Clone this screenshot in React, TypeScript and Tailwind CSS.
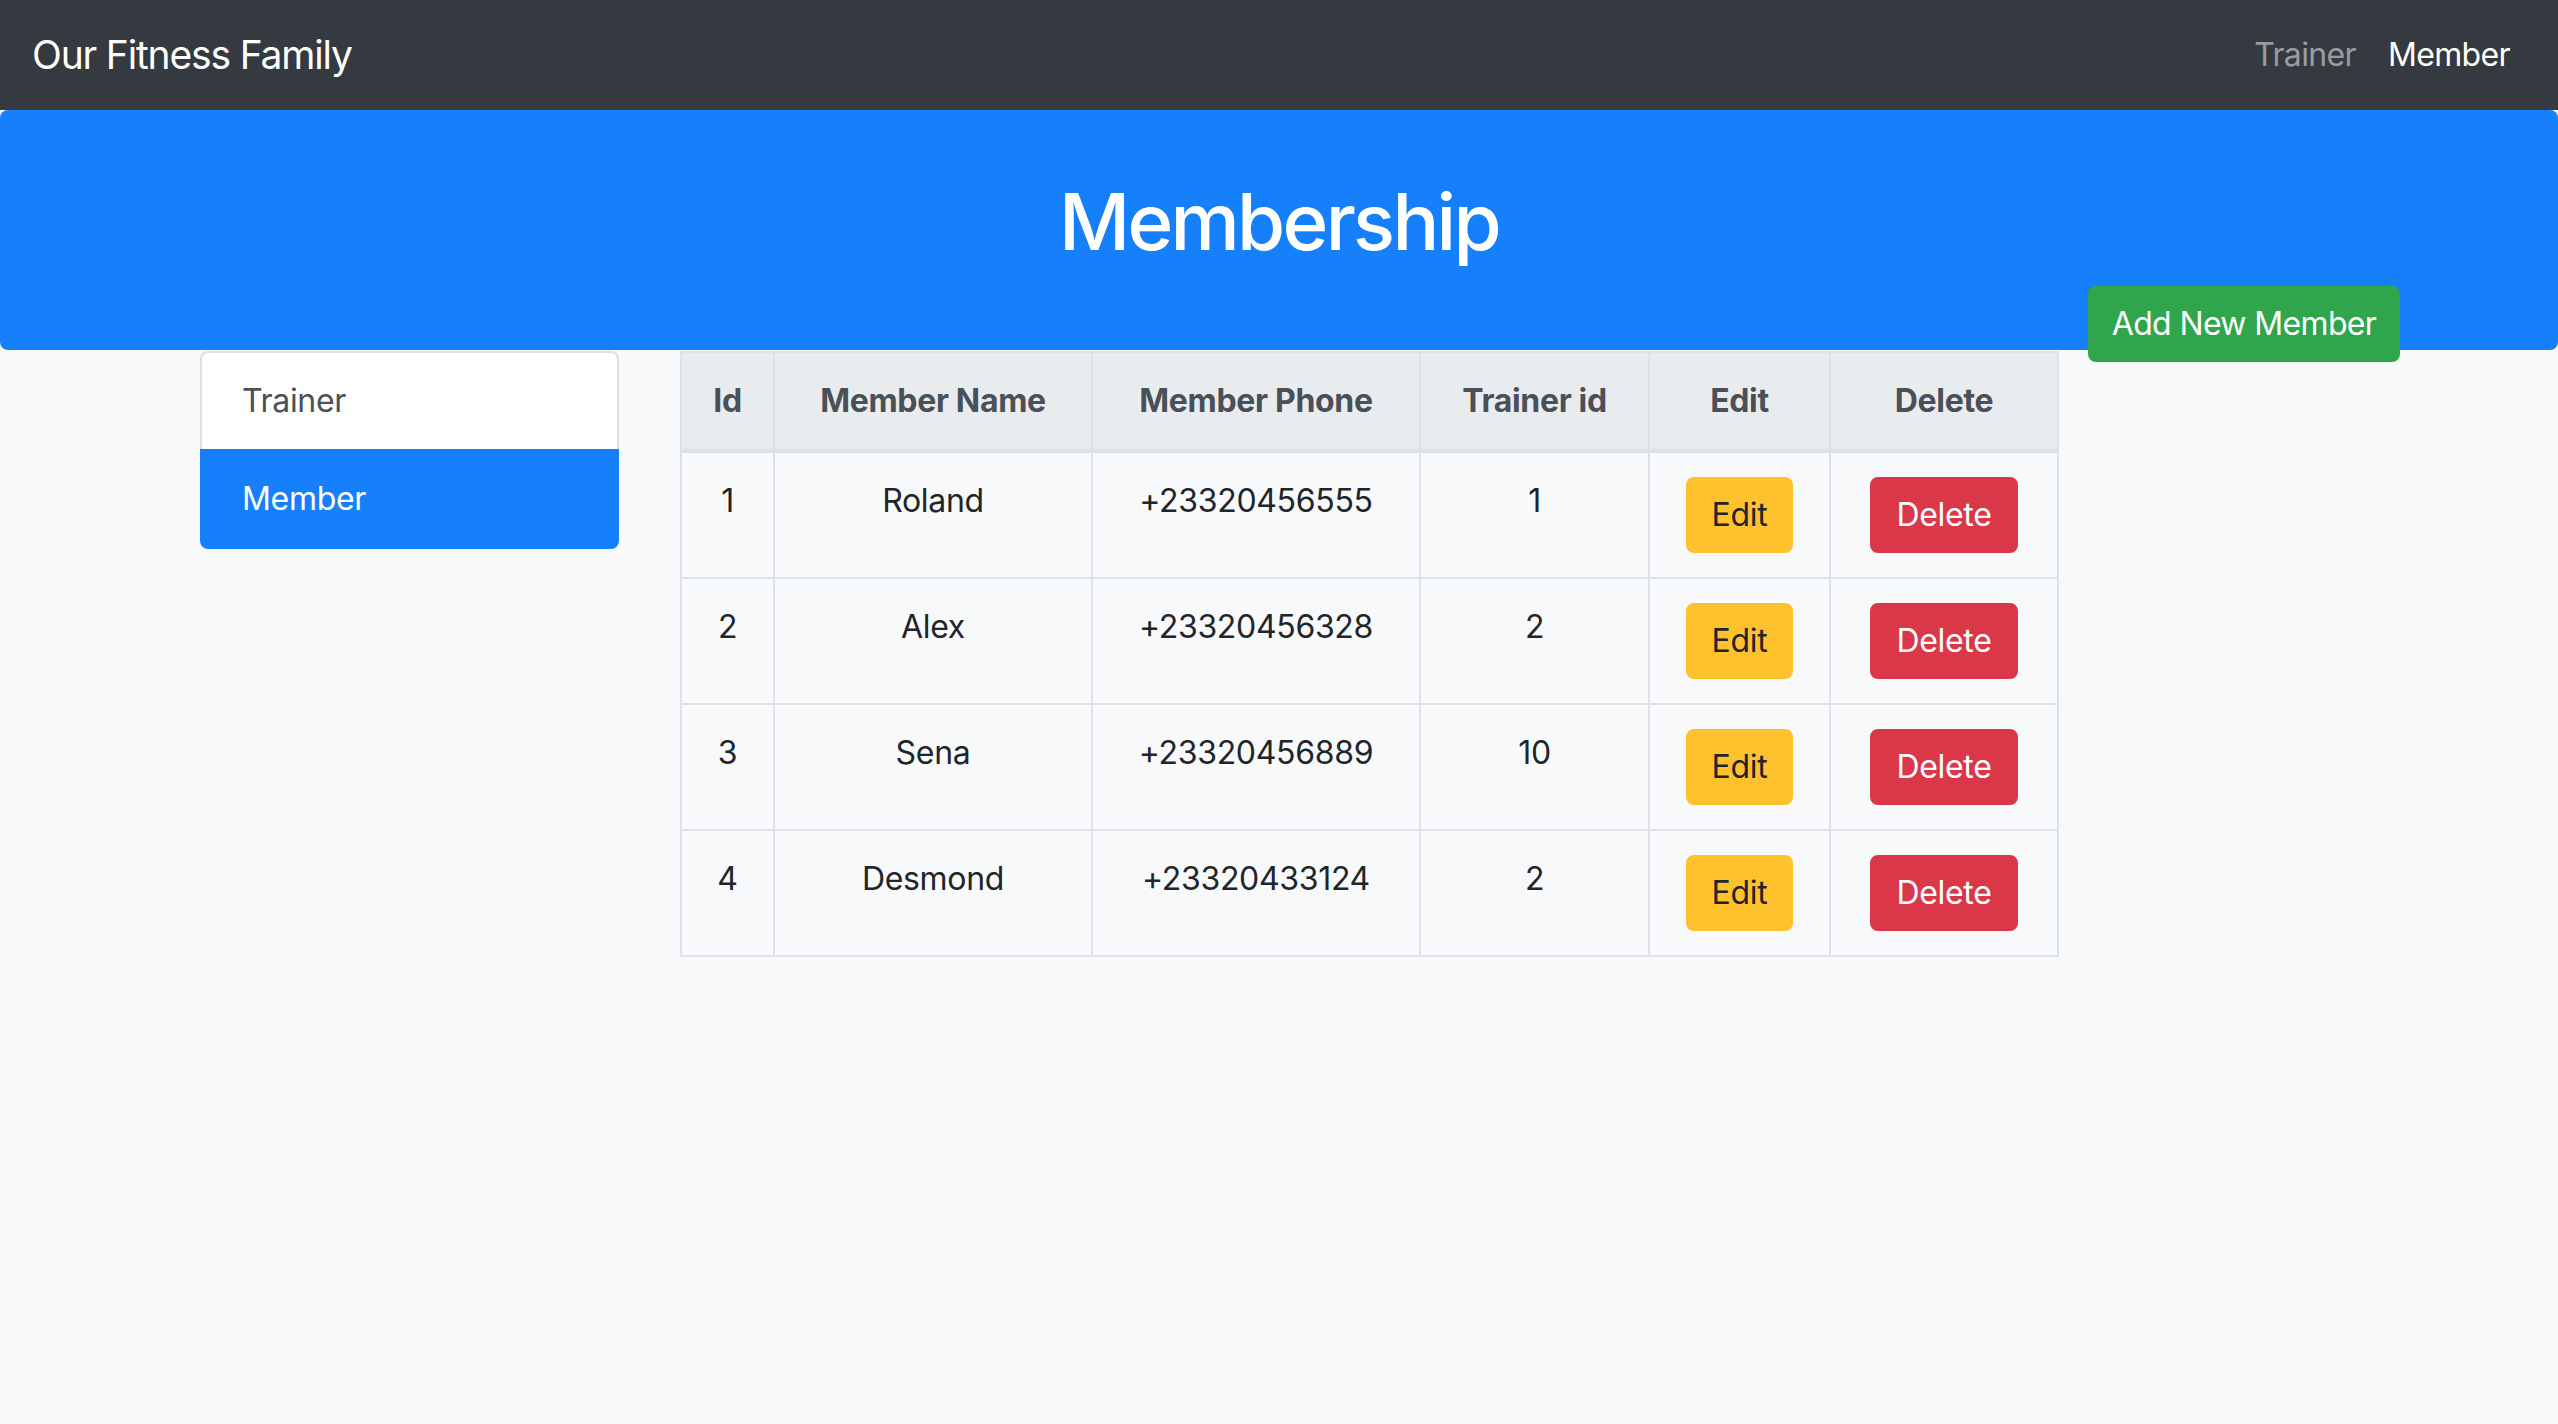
import React from 'react'

interface Member {
  id: number
  name: string
  phone: string
  trainerId: number
}

const members: Member[] = [
  { id: 1, name: 'Roland', phone: '+23320456555', trainerId: 1 },
  { id: 2, name: 'Alex', phone: '+23320456328', trainerId: 2 },
  { id: 3, name: 'Sena', phone: '+23320456889', trainerId: 10 },
  { id: 4, name: 'Desmond', phone: '+23320433124', trainerId: 2 },
]

const Navbar: React.FC = () => (
  <nav className="h-[110px] bg-[#343a40] flex items-center justify-between px-8">
    <span className="text-[39px] leading-[60px] tracking-[-0.03em] text-white">Our Fitness Family</span>
    <div className="flex">
      <a className="px-4 text-[32px] leading-[48px] tracking-[-0.02em] text-white/50">Trainer</a>
      <a className="px-4 text-[32px] leading-[48px] tracking-[-0.02em] text-white">Member</a>
    </div>
  </nav>
)

const Sidebar: React.FC = () => (
  <div className="w-[419px] shrink-0 flex flex-col">
    <div className="px-10 py-6 text-[32px] leading-[48px] tracking-[-0.01em] text-[#495057] bg-white border-2 border-b-0 border-[#dfdfdf] rounded-t-lg">
      Trainer
    </div>
    <div className="px-10 py-6 text-[32px] leading-[48px] tracking-[-0.01em] text-white bg-[#1680fb] border-2 border-[#1680fb] rounded-b-lg">
      Member
    </div>
  </div>
)

const thClass = 'border-2 border-[#dee2e6] border-b-4 px-6 py-6 text-[32px] leading-[48px] tracking-[-0.01em] font-bold text-[#495057] bg-[#e9ecef]'
const tdClass = 'border-2 border-[#dee2e6] px-6 py-6 text-[32px] leading-[48px] tracking-[-0.01em] text-[#212529] align-top'

const MemberTable: React.FC = () => (
  <table className="border-collapse text-center table-fixed w-[1377px]">
    <colgroup>
      <col className="w-[93px]" />
      <col className="w-[318px]" />
      <col className="w-[328px]" />
      <col className="w-[229px]" />
      <col className="w-[181px]" />
      <col className="w-[228px]" />
    </colgroup>
    <thead>
      <tr>
        <th className={thClass}>Id</th>
        <th className={thClass}>Member Name</th>
        <th className={thClass}>Member Phone</th>
        <th className={thClass}>Trainer id</th>
        <th className={thClass}>Edit</th>
        <th className={thClass}>Delete</th>
      </tr>
    </thead>
    <tbody>
      {members.map((m) => (
        <tr key={m.id}>
          <td className={tdClass}>{m.id}</td>
          <td className={tdClass}>{m.name}</td>
          <td className={tdClass}>{m.phone}</td>
          <td className={tdClass}>{m.trainerId}</td>
          <td className={tdClass}>
            <button className="px-6 py-3 text-[32px] leading-[48px] text-[#212529] bg-[#ffc12e] border-2 border-[#ffc12e] rounded-lg">
              Edit
            </button>
          </td>
          <td className={tdClass}>
            <button className="px-6 py-3 text-[32px] leading-[48px] text-white bg-[#da3749] border-2 border-[#da3749] rounded-lg">
              Delete
            </button>
          </td>
        </tr>
      ))}
    </tbody>
  </table>
)

export default function App() {
  return (
    <div className="min-h-screen bg-[#f8f9fa] font-['Inter',sans-serif]">
      <Navbar />
      <div className="bg-[#1680fb] rounded-lg pt-16 pb-16">
        <h1 className="text-center text-[78px] leading-[96px] tracking-[-0.035em] font-medium text-white mb-4">
          Membership
        </h1>
        <div className="h-0 flex justify-end pr-[158px]">
          <button className="h-[76px] w-[312px] text-[32px] leading-[48px] tracking-[-0.02em] text-white bg-[#2fa64b] rounded-lg">
            Add New Member
          </button>
        </div>
      </div>
      <div className="flex items-start pl-[200px] gap-[61px] pt-px">
        <Sidebar />
        <MemberTable />
      </div>
    </div>
  )
}
